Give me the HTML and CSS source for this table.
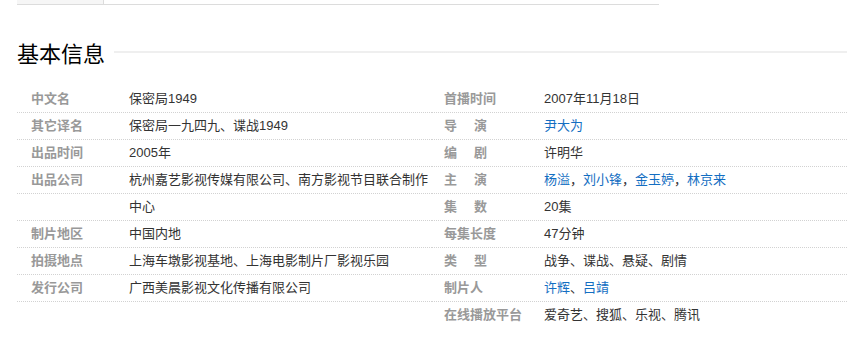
FILE: index.html
```html
<!DOCTYPE html>
<html lang="zh-CN">
<head>
<meta charset="utf-8">
<title>基本信息</title>
<link rel="stylesheet" href="styles.css">
</head>
<body>
<div class="tabbar">
  <div class="tab-first"></div>
  <div class="tab-rest"></div>
</div>

<div class="title-row">
  <h2 class="title">基本信息</h2>
  <div class="title-line"></div>
</div>

<div class="info">
  <dl class="block block-left">
    <div class="row"><dt class="name">中文名</dt><dd class="value">保密局1949</dd></div>
    <div class="row"><dt class="name">其它译名</dt><dd class="value">保密局一九四九、谍战1949</dd></div>
    <div class="row"><dt class="name">出品时间</dt><dd class="value">2005年</dd></div>
    <div class="row"><dt class="name">出品公司</dt><dd class="value">杭州嘉艺影视传媒有限公司、南方影视节目联合制作</dd></div>
    <div class="row"><dt class="name"></dt><dd class="value">中心</dd></div>
    <div class="row"><dt class="name">制片地区</dt><dd class="value">中国内地</dd></div>
    <div class="row"><dt class="name">拍摄地点</dt><dd class="value">上海车墩影视基地、上海电影制片厂影视乐园</dd></div>
    <div class="row"><dt class="name">发行公司</dt><dd class="value">广西美晨影视文化传播有限公司</dd></div>
  </dl>
  <dl class="block block-right">
    <div class="row"><dt class="name">首播时间</dt><dd class="value">2007年11月18日</dd></div>
    <div class="row"><dt class="name spaced">导演</dt><dd class="value"><a class="link" href="#">尹大为</a></dd></div>
    <div class="row"><dt class="name spaced">编剧</dt><dd class="value">许明华</dd></div>
    <div class="row"><dt class="name spaced">主演</dt><dd class="value"><a class="link" href="#">杨溢</a>，<a class="link" href="#">刘小锋</a>，<a class="link" href="#">金玉婷</a>，<a class="link" href="#">林京来</a></dd></div>
    <div class="row"><dt class="name spaced">集数</dt><dd class="value">20集</dd></div>
    <div class="row"><dt class="name">每集长度</dt><dd class="value">47分钟</dd></div>
    <div class="row"><dt class="name spaced">类型</dt><dd class="value">战争、谍战、悬疑、剧情</dd></div>
    <div class="row"><dt class="name">制片人</dt><dd class="value"><a class="link" href="#">许辉</a>、<a class="link" href="#">吕靖</a></dd></div>
    <div class="row row-last"><dt class="name">在线播放平台</dt><dd class="value">爱奇艺、搜狐、乐视、腾讯</dd></div>
  </dl>
</div>
</body>
</html>
```
FILE: styles.css
```css
html, body {
  margin: 0;
  padding: 0;
  background: #fff;
}
body {
  font-family: "Liberation Sans", "Noto Sans CJK SC", sans-serif;
  font-size: 13px;
  color: #333;
}
.tabbar {
  display: flex;
  margin-left: 17px;
  width: 642px;
  height: 4px;
  border-bottom: 1px solid #dcdcdc;
}
.tab-first {
  width: 86px;
  background: #f6f6f6;
  border-right: 1px solid #dcdcdc;
}
.tab-rest {
  flex: 1;
}
.title-row {
  display: flex;
  align-items: center;
  margin: 32px 0 0 17px;
  width: 830px;
  height: 30px;
}
.title {
  margin: 0;
  font-size: 22px;
  font-weight: normal;
  color: #000;
  line-height: 30px;
  font-family: "Noto Sans CJK SC", sans-serif;
}
.title-line {
  flex: 1;
  height: 2px;
  margin-left: 9px;
  background: #efefef;
}
.info {
  display: flex;
  margin: 19px 0 0 17px;
}
.block {
  margin: 0;
  padding: 0;
}
.block-left {
  width: 413px;
}
.block-right {
  width: 416px;
  margin-left: 1px;
}
.row {
  display: flex;
  height: 26px;
  line-height: 26px;
  border-bottom: 1px dotted #d2d2d2;
}
.row-last {
  border-bottom-color: transparent;
}
.name {
  box-sizing: border-box;
  width: 112px;
  padding-left: 14px;
  flex: none;
  font-weight: bold;
  color: #999;
  white-space: nowrap;
}
.block-right .name {
  width: 113px;
  padding-left: 13px;
}
.name.spaced {
  letter-spacing: 17px;
}
.value {
  margin: 0;
  white-space: nowrap;
  color: #333;
}
.link {
  color: #136ec2;
  text-decoration: none;
}
```
